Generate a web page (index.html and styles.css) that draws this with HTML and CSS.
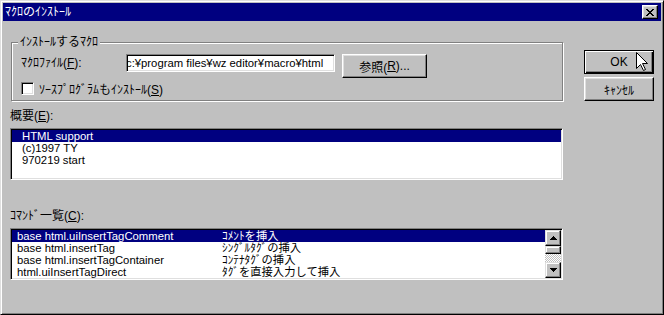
FILE: index.html
```html
<!DOCTYPE html>
<html lang="ja">
<head>
  <meta charset="UTF-8">
  <title>ﾏｸﾛのｲﾝｽﾄｰﾙ</title>
  <link rel="stylesheet" href="styles.css">
</head>
<body>
  <div class="window">
    <div class="titlebar">
      <span class="title">ﾏｸﾛのｲﾝｽﾄｰﾙ</span>
      <span class="close">
        <svg width="8" height="7" viewBox="0 0 8 7" shape-rendering="crispEdges"><path d="M0 0h2v1H0z M6 0h2v1H6z M1 1h2v1H1z M5 1h2v1H5z M2 2h4v1H2z M3 3h2v1H3z M2 4h4v1H2z M1 5h2v1H1z M5 5h2v1H5z M0 6h2v1H0z M6 6h2v1H6z" fill="#000"/></svg>
      </span>
    </div>

    <div class="content">
      <div class="main">
        <fieldset class="group">
          <legend>ｲﾝｽﾄｰﾙするﾏｸﾛ</legend>
          <div class="group-body">
            <div class="file-row">
              <span class="file-label">ﾏｸﾛﾌｧｲﾙ(<u>F</u>):</span>
              <div class="edit"><span class="edit-text">c:¥program files¥wz editor¥macro¥html</span></div>
              <div class="btn btn-browse">参照(<u>R</u>)...</div>
            </div>
            <div class="check-row">
              <span class="checkbox"></span>
              <span>ｿｰｽﾌﾟﾛｸﾞﾗﾑもｲﾝｽﾄｰﾙ(<u>S</u>)</span>
            </div>
          </div>
        </fieldset>

        <div class="caption">概要(<u>E</u>):</div>
        <div class="listbox info">
          <div class="row sel">HTML support</div>
          <div class="row">(c)1997 TY</div>
          <div class="row">970219 start</div>
        </div>

        <div class="caption cmd-caption">ｺﾏﾝﾄﾞ一覧(<u>C</u>):</div>
        <div class="listbox cmd">
          <div class="rows">
            <div class="row sel"><span class="col">base html.uiInsertTagComment</span><span>ｺﾒﾝﾄを挿入</span></div>
            <div class="row"><span class="col">base html.insertTag</span><span>ｼﾝｸﾞﾙﾀｸﾞの挿入</span></div>
            <div class="row"><span class="col">base html.insertTagContainer</span><span>ｺﾝﾃﾅﾀｸﾞの挿入</span></div>
            <div class="row"><span class="col">html.uiInsertTagDirect</span><span>ﾀｸﾞを直接入力して挿入</span></div>
          </div>
          <div class="scrollbar">
            <div class="sb-btn">
              <svg width="7" height="4" viewBox="0 0 7 4" shape-rendering="crispEdges"><path d="M3 0h1v1H3z M2 1h3v1H2z M1 2h5v1H1z M0 3h7v1H0z" fill="#000"/></svg>
            </div>
            <div class="sb-thumb"></div>
            <div class="sb-track"></div>
            <div class="sb-btn">
              <svg width="7" height="4" viewBox="0 0 7 4" shape-rendering="crispEdges"><path d="M0 0h7v1H0z M1 1h5v1H1z M2 2h3v1H2z M3 3h1v1H3z" fill="#000"/></svg>
            </div>
          </div>
        </div>
      </div>

      <div class="side">
        <div class="btn btn-default">OK</div>
        <div class="btn">ｷｬﾝｾﾙ</div>
      </div>
    </div>

    <svg class="cursor" width="12" height="20" viewBox="0 0 12 20"><path d="M0.5 0.5V16.5L4.5 12.5L7.5 18.5L9.5 17.5L6.5 11.5H11.5Z" fill="#fff" stroke="#000" stroke-width="1"/></svg>
  </div>
</body>
</html>
```

FILE: styles.css
```css
body {
  margin: 0;
  background: #c0c0c0;
  color: #000;
  font-family: "Liberation Sans", "Noto Sans CJK JP", sans-serif;
  font-size: 12px;
}
.window {
  position: relative;
  width: 664px;
  height: 315px;
  box-sizing: border-box;
  padding: 2px;
  background: #c0c0c0;
  border: 1px solid;
  border-color: #dfdfdf #000 #000 #dfdfdf;
  box-shadow: inset 1px 1px #fff, inset -1px -1px #808080;
}
.titlebar {
  display: flex;
  align-items: center;
  justify-content: space-between;
  height: 18px;
  padding: 0 3px 0 2px;
  background: #000080;
  color: #fff;
}
.title {
  line-height: 14px;
}
.close {
  display: flex;
  align-items: center;
  justify-content: center;
  width: 16px;
  height: 14px;
  box-sizing: border-box;
  background: #c0c0c0;
  border: 1px solid;
  border-color: #fff #000 #000 #fff;
  box-shadow: inset -1px -1px #808080, inset 1px 1px #dfdfdf;
}
.content {
  display: flex;
  padding: 14px 0 0 7px;
}
.main {
  width: 553px;
}
.side {
  display: flex;
  flex-direction: column;
  gap: 3px;
  margin: 15px 0 0 21px;
}
.group {
  width: 552px;
  box-sizing: border-box;
  margin: 0 0 0 1px;
  padding: 0;
  min-width: 0;
  border: 1px solid #808080;
  box-shadow: inset 1px 1px #fff, 1px 1px #fff;
}
.group legend {
  margin-left: 6px;
  padding: 0 2px;
  line-height: 14px;
  background: #c0c0c0;
}
.group-body {
  padding: 5px 0 5px 9px;
}
.file-row {
  display: flex;
  align-items: flex-start;
}
.file-label {
  width: 105px;
  line-height: 18px;
}
.edit {
  width: 209px;
  height: 18px;
  box-sizing: border-box;
  padding: 0 2px;
  overflow: hidden;
  white-space: nowrap;
  font-size: 11.3px;
  line-height: 16px;
  background: #fff;
  border: 1px solid;
  border-color: #808080 #fff #fff #808080;
  box-shadow: inset 1px 1px #000, inset -1px -1px #dfdfdf;
}
.edit-text {
  display: inline-block;
  margin-left: -3px;
}
.btn {
  display: flex;
  align-items: center;
  justify-content: center;
  width: 70px;
  height: 24px;
  box-sizing: border-box;
  background: #c0c0c0;
  border: 1px solid;
  border-color: #fff #000 #000 #fff;
  box-shadow: inset -1px -1px #808080, inset 1px 1px #dfdfdf;
}
.btn-browse {
  width: 85px;
  margin-left: 7px;
}
.btn-default {
  border-color: #000;
  box-shadow: inset 1px 1px #fff, inset -1px -1px #000, inset -2px -2px #808080;
}
.check-row {
  display: flex;
  align-items: center;
  height: 13px;
  margin-top: 4px;
}
.checkbox {
  width: 13px;
  height: 13px;
  box-sizing: border-box;
  margin-right: 5px;
  background: #fff;
  border: 1px solid;
  border-color: #808080 #fff #fff #808080;
  box-shadow: inset 1px 1px #000, inset -1px -1px #dfdfdf;
}
.caption {
  line-height: 14px;
  margin: 8px 0 5px;
}
.cmd-caption {
  margin-top: 29px;
}
.listbox {
  height: 52px;
  box-sizing: border-box;
  padding: 1px;
  background: #fff;
  border: 1px solid;
  border-color: #808080 #fff #fff #808080;
  box-shadow: inset 1px 1px #000, inset -1px -1px #dfdfdf;
}
.row {
  height: 12px;
  line-height: 12px;
  white-space: nowrap;
  font-size: 11.3px;
}
.info .row {
  padding-left: 10px;
}
.sel {
  background: #000080;
  color: #fff;
}
.cmd {
  display: flex;
}
.rows {
  flex: 1;
}
.cmd .row {
  display: flex;
  padding-left: 5px;
}
.col {
  width: 205px;
}
.scrollbar {
  display: flex;
  flex-direction: column;
  width: 16px;
}
.sb-btn,
.sb-thumb {
  display: flex;
  align-items: center;
  justify-content: center;
  height: 16px;
  box-sizing: border-box;
  background: #c0c0c0;
  border: 1px solid;
  border-color: #dfdfdf #000 #000 #dfdfdf;
  box-shadow: inset -1px -1px #808080, inset 1px 1px #fff;
}
.sb-thumb {
  height: 8px;
}
.sb-track {
  height: 8px;
  background: repeating-conic-gradient(#c0c0c0 0 25%, #fff 0 50%) 0 0 / 2px 2px;
}
.cursor {
  position: absolute;
  left: 635px;
  top: 51px;
}
```
